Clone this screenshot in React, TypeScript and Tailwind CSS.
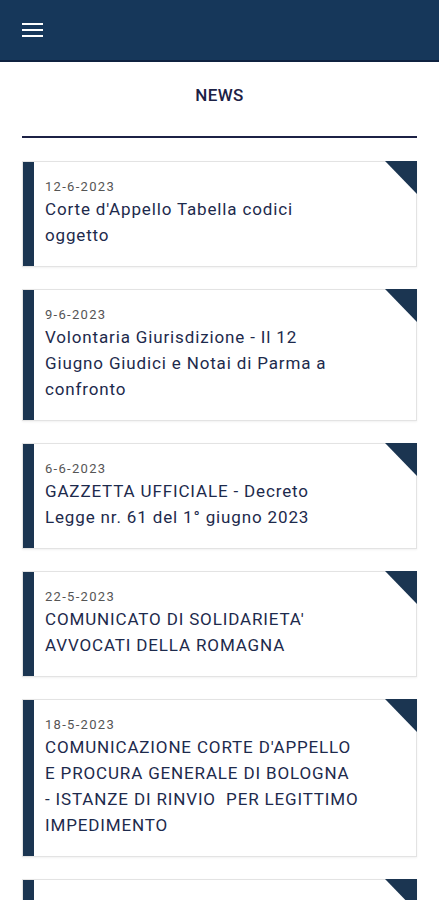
import React from "react";

const items = [
  { date: "12-6-2023", title: ["Corte d'Appello Tabella codici", "oggetto"] },
  { date: "9-6-2023", title: ["Volontaria Giurisdizione - Il 12", "Giugno Giudici e Notai di Parma a", "confronto"] },
  { date: "6-6-2023", title: ["GAZZETTA UFFICIALE - Decreto", "Legge nr. 61 del 1° giugno 2023"] },
  { date: "22-5-2023", title: ["COMUNICATO DI SOLIDARIETA'", "AVVOCATI DELLA ROMAGNA"] },
  { date: "18-5-2023", title: ["COMUNICAZIONE CORTE D'APPELLO", "E PROCURA GENERALE DI BOLOGNA", "- ISTANZE DI RINVIO  PER LEGITTIMO", "IMPEDIMENTO"] },
  { date: "5-5-2023", title: ["COMUNICATO", "STAMPA"] },
];

export default function App() {
  return (
    <div className="w-[439px] h-[900px] overflow-hidden bg-white" style={{ fontFamily: "Roboto, 'Liberation Sans', sans-serif" }}>
      <header className="h-[62px] bg-[#16375a] border-b-2 border-[#0f2240] flex items-center pl-[22px]">
        <div className="flex flex-col gap-[4px] w-[21px]">
          <span className="h-[2px] bg-white block" />
          <span className="h-[2px] bg-white block" />
          <span className="h-[2px] bg-white block" />
        </div>
      </header>
      <div className="px-[22px]">
        <h1 className="text-center text-[17px] font-medium text-[#1c2145] pt-[23px] pb-[31px] leading-[20px] tracking-[0.02em]">NEWS</h1>
        <div className="h-[2px] bg-[#1c2145]" />
        <div className="flex flex-col gap-[22px] pt-[23px]">
          {items.map((it, i) => (
            <div key={i} className="relative flex border border-[#e3e3e3] bg-white shadow-[0_1px_2px_rgba(0,0,0,0.06)]">
              <div className="w-[11px] bg-[#1b3551] shrink-0" />
              <div className="pl-[11px] pr-[30px] pt-[16px] pb-[18px]">
                <div className="text-[13px] leading-[18px] text-[#555] tracking-[0.1em]">{it.date}</div>
                <div className="text-[17px] leading-[26px] text-[#1d2a4c] tracking-[0.05em]">
                  {it.title.map((t, j) => (
                    <div key={j} className="whitespace-pre">{t}</div>
                  ))}
                </div>
              </div>
              <svg className="absolute -top-px -right-px" width="32" height="33" viewBox="0 0 32 33">
                <polygon points="0,0 32,0 32,33" fill="#1b3551" />
              </svg>
            </div>
          ))}
        </div>
      </div>
    </div>
  );
}
